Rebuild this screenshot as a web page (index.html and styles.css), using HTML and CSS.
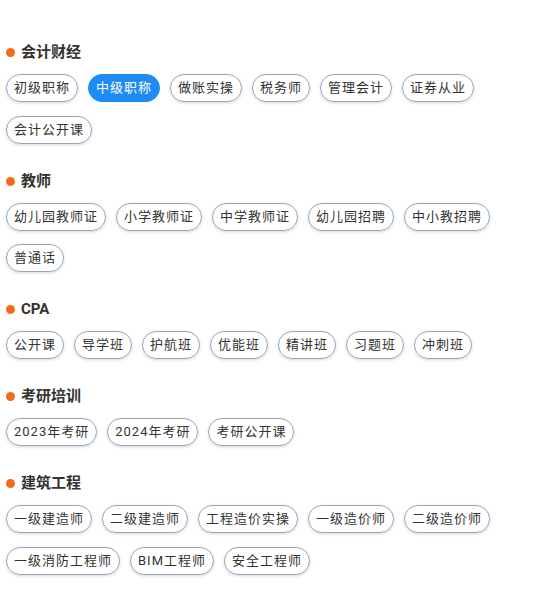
FILE: index.html
```html
<!DOCTYPE html>
<html lang="zh-CN">
<head>
    <meta charset="UTF-8">
    <meta name="viewport" content="width=device-width, initial-scale=1.0">
    <title>课程分类</title>
    <link rel="stylesheet" href="styles.css">
</head>
<body>
    <div class="page">
        <div class="section">
            <h3 class="section-title">会计财经</h3>
            <div class="tag-list">
                <span class="tag">初级职称</span>
                <span class="tag active">中级职称</span>
                <span class="tag">做账实操</span>
                <span class="tag">税务师</span>
                <span class="tag">管理会计</span>
                <span class="tag">证券从业</span>
                <span class="tag">会计公开课</span>
            </div>
        </div>

        <div class="section">
            <h3 class="section-title">教师</h3>
            <div class="tag-list">
                <span class="tag">幼儿园教师证</span>
                <span class="tag">小学教师证</span>
                <span class="tag">中学教师证</span>
                <span class="tag">幼儿园招聘</span>
                <span class="tag">中小教招聘</span>
                <span class="tag">普通话</span>
            </div>
        </div>

        <div class="section">
            <h3 class="section-title">CPA</h3>
            <div class="tag-list">
                <span class="tag">公开课</span>
                <span class="tag">导学班</span>
                <span class="tag">护航班</span>
                <span class="tag">优能班</span>
                <span class="tag">精讲班</span>
                <span class="tag">习题班</span>
                <span class="tag">冲刺班</span>
            </div>
        </div>

        <div class="section">
            <h3 class="section-title">考研培训</h3>
            <div class="tag-list">
                <span class="tag">2023年考研</span>
                <span class="tag">2024年考研</span>
                <span class="tag">考研公开课</span>
            </div>
        </div>

        <div class="section">
            <h3 class="section-title">建筑工程</h3>
            <div class="tag-list">
                <span class="tag">一级建造师</span>
                <span class="tag">二级建造师</span>
                <span class="tag">工程造价实操</span>
                <span class="tag">一级造价师</span>
                <span class="tag">二级造价师</span>
                <span class="tag">一级消防工程师</span>
                <span class="tag">BIM工程师</span>
                <span class="tag">安全工程师</span>
            </div>
        </div>
    </div>
</body>
</html>
```

FILE: styles.css
```css
:root {
    --text-color: #333333;
    --dot-color: #f26b1d;
    --active-color: #1f8bf5;
    --tag-border: #9aa6b6;
}

body {
    margin: 0;
    font-family: Roboto, "Noto Sans CJK SC", sans-serif;
    color: var(--text-color);
    background-color: #ffffff;
}

.page {
    padding: 42px 0 0 6px;
}

.section {
    margin-bottom: 13.5px;
}

.section-title {
    position: relative;
    margin: 0 0 12px;
    padding-left: 15px;
    font-size: 15px;
    font-weight: 700;
    line-height: 20px;
}

.section-title::before {
    content: '';
    position: absolute;
    left: 0;
    top: 6px;
    width: 9px;
    height: 9px;
    border-radius: 50%;
    background-color: var(--dot-color);
}

.tag-list {
    display: flex;
    flex-wrap: wrap;
}

.tag {
    box-sizing: border-box;
    height: 28px;
    margin: 0 10px 13.5px 0;
    padding: 0 7px;
    border: 1px solid var(--tag-border);
    border-radius: 14px;
    font-size: 13px;
    line-height: 26px;
    letter-spacing: 1px;
    color: var(--text-color);
    white-space: nowrap;
    box-shadow: 0 1px 3px rgba(80, 100, 130, 0.25);
}

.tag.active {
    background-color: var(--active-color);
    border-color: var(--active-color);
    color: #ffffff;
    box-shadow: none;
}
```
